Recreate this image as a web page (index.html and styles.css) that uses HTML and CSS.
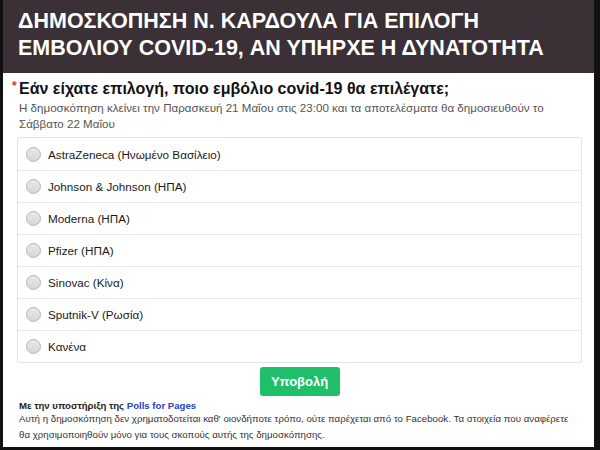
FILE: index.html
```html
<!DOCTYPE html>
<html>
<head>
    <meta charset="utf-8">
    <title>Δημοσκόπηση</title>
    <link rel="stylesheet" href="styles.css">
</head>
<body>
    <div class="frame">
        <div class="header">
            <h1>ΔΗΜΟΣΚΟΠΗΣΗ Ν. ΚΑΡΔΟΥΛΑ ΓΙΑ ΕΠΙΛΟΓΗ ΕΜΒΟΛΙΟΥ COVID-19, ΑΝ ΥΠΗΡΧΕ Η ΔΥΝΑΤΟΤΗΤΑ</h1>
        </div>
        <div class="content">
            <h2 class="question"><span class="req">*</span>Εάν είχατε επιλογή, ποιο εμβόλιο covid-19 θα επιλέγατε;</h2>
            <p class="note">Η δημοσκόπηση κλείνει την Παρασκευή 21 Μαΐου στις 23:00 και τα αποτελέσματα θα δημοσιευθούν το Σάββατο 22 Μαΐου</p>
            <div class="options">
                <label class="option"><span class="radio"></span>AstraZeneca (Ηνωμένο Βασίλειο)</label>
                <label class="option"><span class="radio"></span>Johnson &amp; Johnson (ΗΠΑ)</label>
                <label class="option"><span class="radio"></span>Moderna (ΗΠΑ)</label>
                <label class="option"><span class="radio"></span>Pfizer (ΗΠΑ)</label>
                <label class="option"><span class="radio"></span>Sinovac (Κίνα)</label>
                <label class="option"><span class="radio"></span>Sputnik-V (Ρωσία)</label>
                <label class="option"><span class="radio"></span>Κανένα</label>
            </div>
            <div class="actions">
                <button class="submit">Υποβολή</button>
            </div>
            <p class="powered">Με την υποστήριξη της <a href="#">Polls for Pages</a></p>
            <p class="disclaimer">Αυτή η δημοσκόπηση δεν χρηματοδοτείται καθ' οιονδήποτε τρόπο, ούτε παρέχεται από το Facebook. Τα στοιχεία που αναφέρετε θα χρησιμοποιηθούν μόνο για τους σκοπούς αυτής της δημοσκόπησης.</p>
        </div>
    </div>
</body>
</html>
```

FILE: styles.css
```css
html, body {
    margin: 0;
    background-color: #111;
}
body {
    font-family: "Liberation Sans", Arial, sans-serif;
}
.frame {
    box-sizing: border-box;
    width: 600px;
    height: 450px;
    border-left: 3px solid #111;
    border-right: 6px solid #111;
    border-bottom: 3px solid #111;
    background-color: #fff;
    overflow: hidden;
}
.header {
    background-color: #3a3035;
    height: 73px;
    padding: 8px 15px 0;
    box-sizing: border-box;
}
h1 {
    margin: 0;
    color: #fff;
    font-size: 21.5px;
    line-height: 27px;
    font-weight: bold;
    width: 560px;
}
.content {
    padding: 0 12px 0 14px;
}
.question {
    position: relative;
    margin: 6px 0 0;
    padding-left: 2px;
    font-size: 16px;
    line-height: 20px;
    color: #111;
}
.req {
    position: absolute;
    left: -5px;
    top: -3px;
    color: #e0312b;
    font-size: 12px;
}
.note {
    margin: 1px 0 0 2px;
    font-size: 11.6px;
    line-height: 16px;
    color: #555;
}
.options {
    margin-top: 5px;
    border: 1px solid #e4e4e4;
    border-radius: 2px;
}
.option {
    display: flex;
    align-items: center;
    height: 31px;
    padding-left: 8px;
    font-size: 11.7px;
    color: #1a1a1a;
    border-top: 1px solid #e8e8e8;
}
.option:first-child {
    border-top: none;
    height: 32px;
}
.radio {
    width: 13px;
    height: 13px;
    border: 1px solid #b5b5b5;
    border-radius: 50%;
    background: linear-gradient(#e8e8e8, #d6d6d6);
    margin-right: 7px;
}
.actions {
    display: flex;
    justify-content: center;
    margin-top: 4px;
}
.submit {
    width: 80px;
    height: 29px;
    border: none;
    border-radius: 3px;
    background-color: #1fbf6c;
    color: #fff;
    font-family: inherit;
    font-size: 13px;
    font-weight: bold;
}
.powered {
    margin: 4px 0 0 2px;
    font-size: 9.6px;
    font-weight: bold;
    color: #222;
}
.powered a {
    color: #2343c8;
    text-decoration: none;
}
.disclaimer {
    margin: 0 10px 0 2px;
    font-size: 9.7px;
    line-height: 16px;
    color: #333;
}
```
